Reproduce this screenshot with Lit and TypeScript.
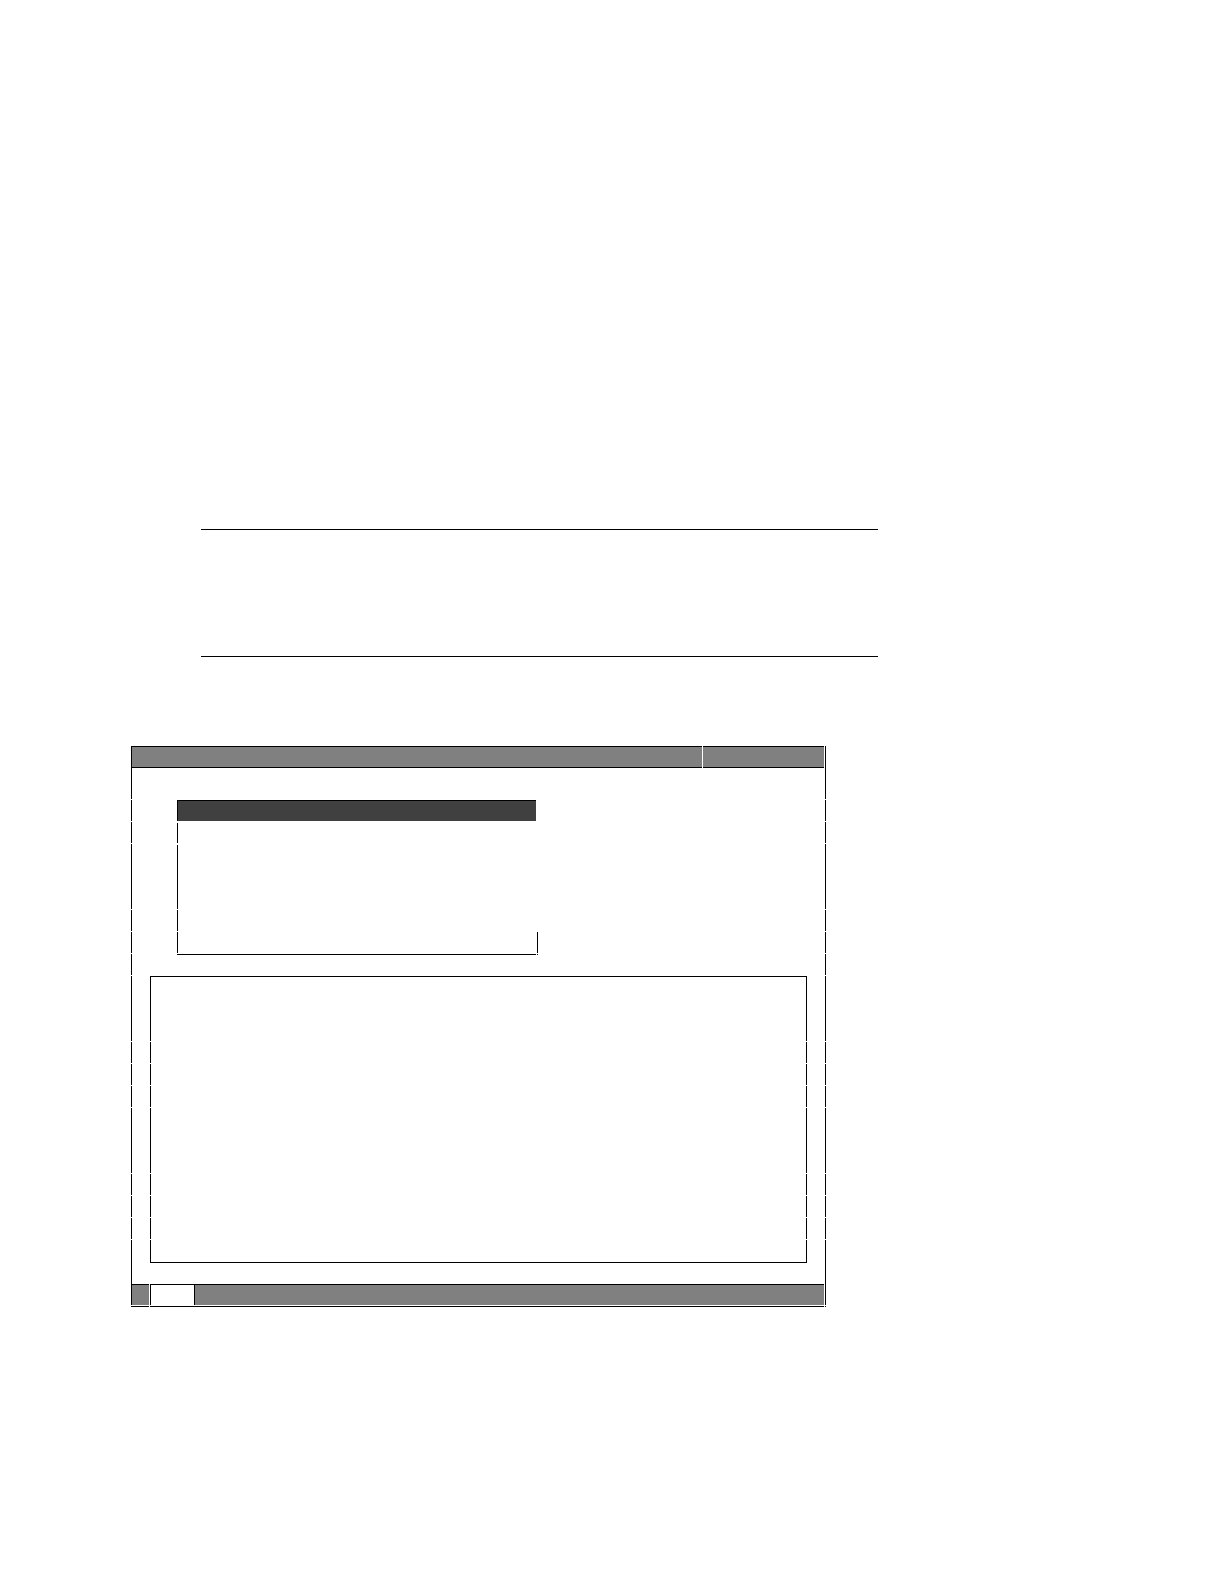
import { LitElement, html, css } from "lit";
import { customElement } from "lit/decorators.js";

/** One stroke of a vertical border: its length and the gap below it. */
type Stroke = [length: number, gap: number];

const upper: Stroke[] = [[53, 1], [21, 1], [21, 1], [65, 1], [21, 1], [21, 1], [21, 1]];
const lower: Stroke[] = [[65, 1], [21, 1], [21, 1], [21, 1], [65, 1], [21, 1], [21, 1], [21, 1]];
const frameStrokes: Stroke[] = [...upper, ...lower, [65, 0]];
const menuStrokes: Stroke[] = [[21, 2], [20, 2], [64, 1], [21, 1], [21, 1]];
const panelStrokes: Stroke[] = [...lower, [22, 0]];

const rail = (strokes: Stroke[]) => html`
  <div class="rail">
    ${strokes.map(
      ([length, gap]) =>
        html`<div class="stroke" style="height:${length}px;margin-bottom:${gap}px"></div>`
    )}
  </div>
`;

@customElement("app-root")
export class AppRoot extends LitElement {
  static styles = css`
    :host {
      display: block;
      background: #fff;
      font-family: "Liberation Sans", sans-serif;
    }
    .page {
      box-sizing: border-box;
      min-height: 100vh;
      padding-top: 529px;
    }
    .heading {
      box-sizing: border-box;
      height: 128px;
      margin: 0 346px 89px 201px;
      border-top: 1px solid #000;
      border-bottom: 1px solid #000;
    }
    .window {
      margin: 0 398px 0 131px;
    }
    .frame {
      display: grid;
      grid-template-columns: 1px 1fr 1px;
    }
    .content {
      display: flex;
      flex-direction: column;
      margin-right: 1px;
    }
    .rail {
      display: flex;
      flex-direction: column;
      width: 1px;
    }
    .stroke {
      flex: none;
      background: #000;
    }
    .title {
      display: grid;
      grid-template-columns: 1fr 121px;
      gap: 1px;
    }
    .cell {
      height: 20px;
      background: #808080;
      border-top: 1px solid #000;
      border-bottom: 1px solid #000;
    }
    .menu {
      display: grid;
      grid-template-columns: 1px 1fr 1px;
      margin: 32px 286px 0 45px;
    }
    .menu-body {
      display: flex;
      flex-direction: column;
      justify-content: space-between;
      margin-right: 1px;
    }
    .selected {
      height: 20px;
      background: #404040;
      border-top: 1px solid #000;
    }
    .menu-edge {
      align-self: end;
      height: 21px;
      margin-bottom: 1px;
      background: #000;
    }
    .menu-base {
      display: grid;
      grid-template-columns: 1fr 1px;
      gap: 1px;
      margin: 0 286px 0 45px;
    }
    .panel {
      display: grid;
      grid-template-columns: 1px 1fr 1px;
      margin: 21px 17px 0 18px;
    }
    .panel-body {
      border-top: 1px solid #000;
    }
    .panel-base {
      margin: 0 17px 0 18px;
    }
    .line {
      height: 1px;
      background: #000;
    }
    .footer {
      display: grid;
      grid-template-columns: 17px 45px 1fr;
      margin-top: 21px;
    }
    .slot {
      height: 20px;
      background: #808080;
      border-top: 1px solid #000;
    }
    .tab {
      height: 20px;
      margin-left: 1px;
      margin-right: -1px;
      background: #fff;
      border: 1px solid #000;
      border-bottom: 0;
    }
    .rest {
      margin-left: 1px;
    }
    .base {
      display: grid;
      grid-template-columns: 18px 1fr 1px;
      gap: 1px;
      margin-top: 1px;
    }
  `;

  render() {
    return html`
      <main class="page">
        <div class="heading"></div>
        <section class="window">
          <div class="frame">
            ${rail(frameStrokes)}
            <div class="content">
              <header class="title">
                <div class="cell"></div>
                <div class="cell"></div>
              </header>
              <div class="menu">
                ${rail(menuStrokes)}
                <div class="menu-body"><div class="selected"></div></div>
                <div class="menu-edge"></div>
              </div>
              <div class="menu-base">
                <div class="line"></div>
                <div class="line"></div>
              </div>
              <div class="panel">
                ${rail(panelStrokes)}
                <div class="panel-body"></div>
                ${rail(panelStrokes)}
              </div>
              <div class="panel-base line"></div>
              <footer class="footer">
                <div class="slot"></div>
                <div class="tab"></div>
                <div class="slot rest"></div>
              </footer>
            </div>
            ${rail(frameStrokes)}
          </div>
          <div class="base">
            <div class="line"></div>
            <div class="line"></div>
            <div class="line"></div>
          </div>
        </section>
      </main>
    `;
  }
}
